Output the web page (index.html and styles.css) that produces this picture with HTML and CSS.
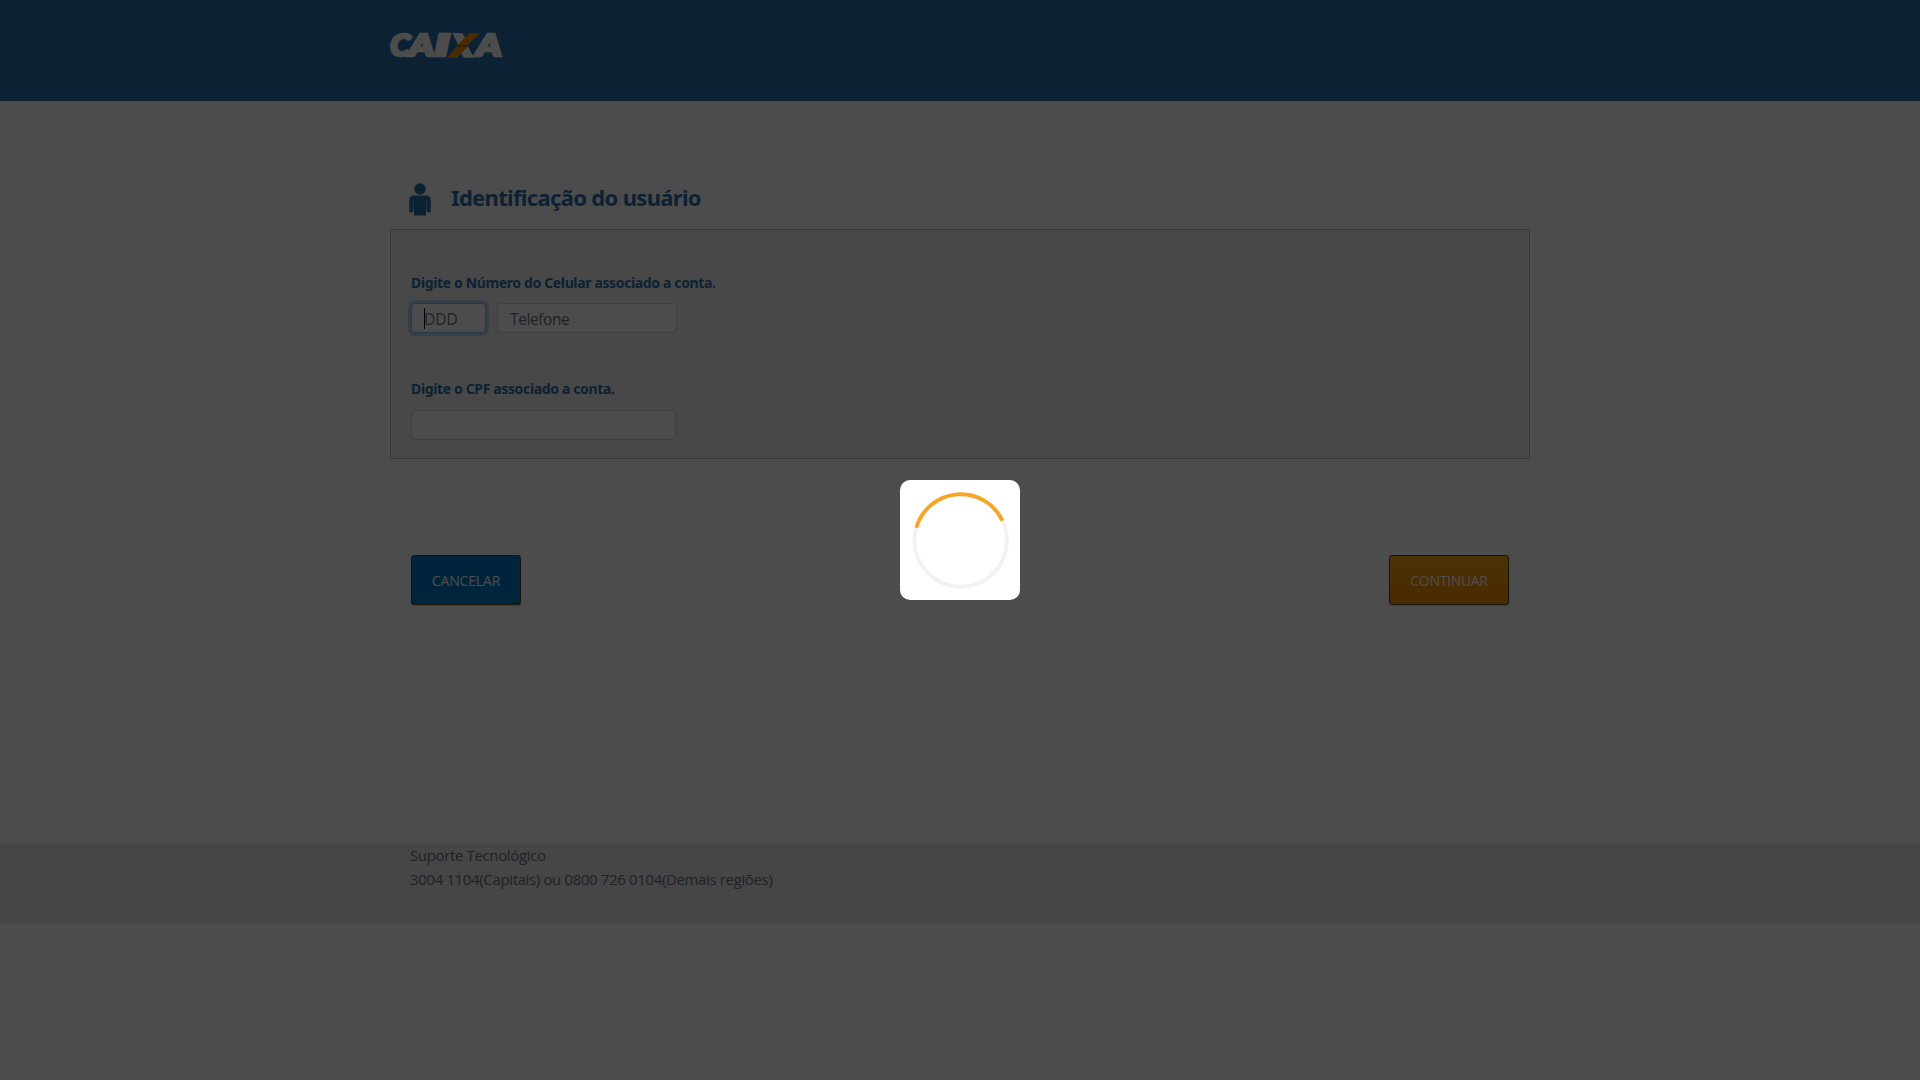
FILE: index.html
```html
<!DOCTYPE html>
<html lang="pt-BR">
<head>
<meta charset="utf-8">
<title>Identificação do usuário</title>
<link rel="stylesheet" href="styles.css">
</head>
<body>
<header class="header">
  <div class="container">
    <svg class="logo" viewBox="30 39 336 75" width="112" height="25" role="img" aria-label="Caixa">
      <g class="logo-text">
        <text x="31" y="109" textLength="60" lengthAdjust="spacingAndGlyphs">C</text>
        <text x="87" y="109" textLength="76" lengthAdjust="spacingAndGlyphs">A</text>
        <text x="163" y="109" textLength="46" lengthAdjust="spacingAndGlyphs">I</text>
        <text x="289" y="109" textLength="76" lengthAdjust="spacingAndGlyphs">A</text>
      </g>
      <path fill="#fff" d="M217 39h30l11 17-19 19h-4zM264 79l18 34h-31l-9-18z"/>
      <path fill="#f39200" d="M268 39h32l-36 36h-31zM232 79h32l-33 34h-31z"/>
    </svg>
  </div>
</header>
<main class="container main">
  <div class="title-row">
    <svg class="person" viewBox="0 0 22 33" width="22" height="33">
      <circle cx="11" cy="6" r="5.7"/>
      <path d="M4.500 12.500h13a4.200 4.200 0 0 1 4.200 4.200v10a1.700 1.700 0 0 1-3.400 1.500h-1.300v4.300H5v-4.300H3.700a1.700 1.700 0 0 1-3.400-1.500v-10a4.200 4.200 0 0 1 4.200-4.200z"/>
      <path class="person-gap" d="M4.400 18v10M17.600 18v10"/>
    </svg>
    <h1 class="title">Identificação do usuário</h1>
  </div>
  <section class="panel">
    <label class="label label-phone">Digite o Número do Celular associado a conta.</label>
    <div class="fields">
      <div class="input input-ddd"><span class="caret"></span>DDD</div>
      <div class="input input-phone">Telefone</div>
    </div>
    <label class="label label-cpf">Digite o CPF associado a conta.</label>
    <div class="input input-cpf"></div>
  </section>
  <div class="actions">
    <button class="btn btn-cancel">CANCELAR</button>
    <button class="btn btn-continue">CONTINUAR</button>
  </div>
</main>
<footer class="footer">
  <div class="container support">
    <div>Suporte Tecnológico</div>
    <div>3004 1104(Capitais) ou 0800 726 0104(Demais regiões)</div>
  </div>
</footer>
<div class="overlay">
  <div class="loader">
    <svg viewBox="0 0 120 120" width="120" height="120">
      <circle class="track" cx="60.700" cy="60.500" r="46.200"/>
      <path class="arc" d="M16.300 47.800A46.200 46.200 0 0 1 102.500 40.700"/>
    </svg>
  </div>
</div>
</body>
</html>
```
FILE: styles.css
```css
* { box-sizing: border-box; }
body {
  margin: 0;
  height: 1080px;
  overflow: hidden;
  background: #fff;
  font-family: "Open Sans", "Noto Sans", sans-serif;
  font-size: 15px;
  line-height: 24px;
  color: #6c757d;
}
.container { width: 1140px; margin: 0 auto; }
.header { height: 101px; padding-top: 33px; background: #2b71aa; }
.logo { display: block; overflow: visible; }
.logo-text {
  font-family: Lato, sans-serif;
  font-size: 91px;
  font-weight: 900;
  font-style: italic;
  fill: #fff;
  stroke: #fff;
  stroke-width: 8;
}
.main { height: 742px; padding-top: 82px; }
.title-row { display: flex; height: 46px; padding-left: 19px; }
.person { fill: #2b71aa; }
.person-gap { fill: none; stroke: #fff; stroke-width: 0.5; }
.title {
  margin: 0 0 0 20px;
  font-family: "Noto Sans", sans-serif;
  font-size: 22px;
  line-height: 29px;
  font-weight: 700;
  letter-spacing: -0.67px;
  color: #2b71aa;
  white-space: nowrap;
}
.panel {
  height: 230px;
  padding: 41px 20px 0;
  border: 1px solid #b8b8b8;
  background: #f2f2f2;
}
.label {
  display: block;
  height: 24px;
  font-family: "Noto Sans", sans-serif;
  font-size: 14px;
  font-weight: 700;
  letter-spacing: -0.36px;
  color: #2b71aa;
  white-space: nowrap;
}
.fields { display: flex; gap: 11px; margin-top: 8px; }
.input {
  height: 30px;
  padding: 0 12px;
  border: 1px solid #ced4da;
  border-radius: 4px;
  background: #fff;
  font-size: 15.5px;
  letter-spacing: -0.4px;
  line-height: 31px;
}
.input-ddd {
  position: relative;
  width: 75px;
  border-color: #80bdff;
  box-shadow: 0 0 0 3px #b9d3f0;
  letter-spacing: 0;
}
.caret {
  position: absolute;
  left: 12px;
  top: 4px;
  width: 1px;
  height: 21px;
  background: #000;
}
.input-phone { width: 180px; }
.label-cpf { margin-top: 44px; }
.input-cpf { width: 265px; margin-top: 9px; }
.actions { display: flex; justify-content: space-between; margin-top: 96px; padding: 0 21px; }
.btn {
  height: 50px;
  padding: 1px 0 0;
  border: 1px solid #574a20;
  border-radius: 3px;
  box-shadow: 0 1px 2px rgba(0, 0, 0, 0.2);
  font-family: "Open Sans", sans-serif;
  font-size: 14px;
  letter-spacing: -0.15px;
  color: #fff;
}
.btn-cancel { width: 110px; background: #007bc8; }
.btn-continue { width: 120px; background: linear-gradient(#faa51a, #f78c00); letter-spacing: -0.3px; }
.footer { height: 80px; background: #e9e9e9; }
.support { padding: 0 20px; letter-spacing: -0.36px; }
.overlay {
  position: fixed;
  inset: 0;
  display: flex;
  align-items: center;
  justify-content: center;
  background: rgba(0, 0, 0, 0.7);
}
.loader { width: 120px; height: 120px; border-radius: 10px; background: #fff; }
.loader svg { display: block; }
.track, .arc { fill: none; stroke-width: 3.800; }
.track { stroke: #f2f2f2; }
.arc { stroke: #f5a623; }
```
